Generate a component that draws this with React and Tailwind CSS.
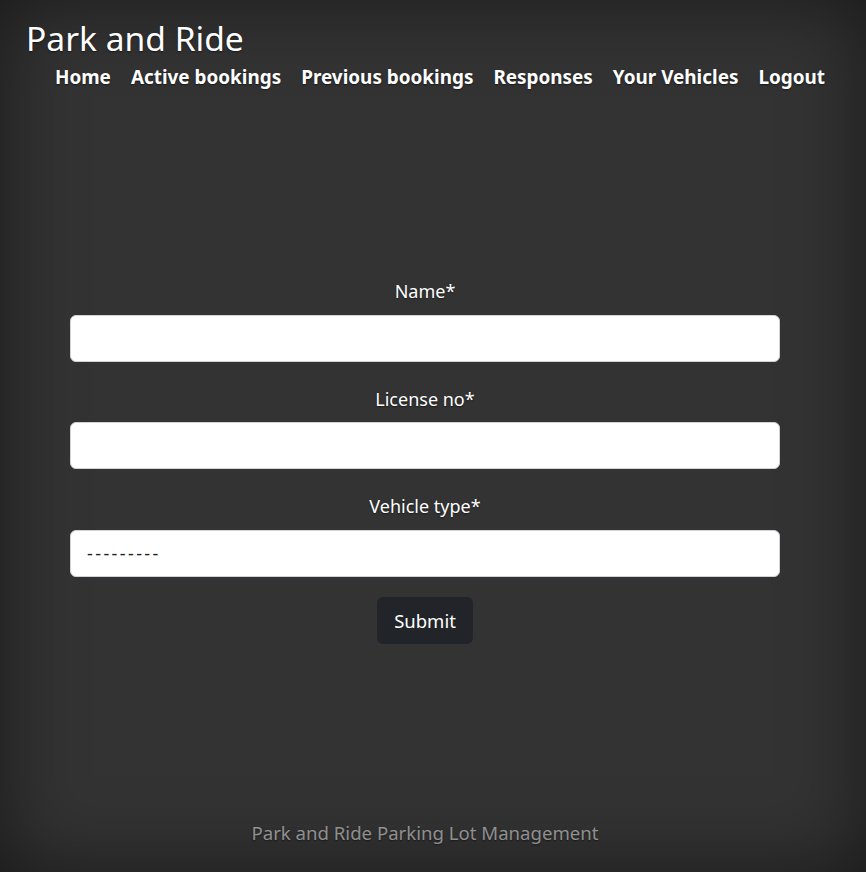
export default function App() {
  const font = { fontFamily: '"Noto Sans", "Open Sans", sans-serif' };
  const navItems = ["Home", "Active bookings", "Previous bookings", "Responses", "Your Vehicles", "Logout"];
  return (
    <div
      className="w-full h-[872px] bg-[#333333] text-white shadow-[inset_0_0_5rem_rgba(0,0,0,0.5)] [text-shadow:0_0.05rem_0.1rem_rgba(0,0,0,0.5)]"
      style={font}
    >
      <div className="w-[850px] h-full flex flex-col">
        <header className="pl-[26px] pr-[25px] pt-[14px]">
          <h3 className="text-[33.6px] leading-[48px] font-normal">Park and Ride</h3>
          <nav className="flex justify-end gap-[20px]">
            {navItems.map((t) => (
              <a key={t} className="text-[18.9px] leading-[30px] font-bold text-white">
                {t}
              </a>
            ))}
          </nav>
        </header>

        <main className="flex flex-col items-center px-[70px] mt-[184px]">
          <form className="w-full flex flex-col items-center">
            <label className="text-[18px] leading-[30px] mb-[9px]">Name*</label>
            <input className="w-full h-[47px] bg-white border border-[#ced4da] rounded-[6px] px-4 text-[18px] text-[#212529]" />
            <label className="text-[18px] leading-[30px] mt-[22px] mb-[8px]">License no*</label>
            <input className="w-full h-[47px] bg-white border border-[#ced4da] rounded-[6px] px-4 text-[18px] text-[#212529]" />
            <label className="text-[18px] leading-[30px] mt-[22px] mb-[9px]">Vehicle type*</label>
            <div className="w-full h-[47px] bg-white border border-[#ced4da] rounded-[6px] px-4 flex items-center text-[18px] text-[#212529] tracking-[2.4px] [text-shadow:none]">
              ---------
            </div>
            <button
              type="button"
              className="mt-[20px] w-[96px] h-[47px] bg-[#212529] rounded-[6px] text-[18.5px] text-white"
            >
              Submit
            </button>
          </form>
        </main>

        <footer className="mt-auto pb-[24px] text-center">
          <p className="text-[18.6px] leading-[30px] text-[rgba(255,255,255,0.5)]">Park and Ride Parking Lot Management</p>
        </footer>
      </div>
    </div>
  );
}
